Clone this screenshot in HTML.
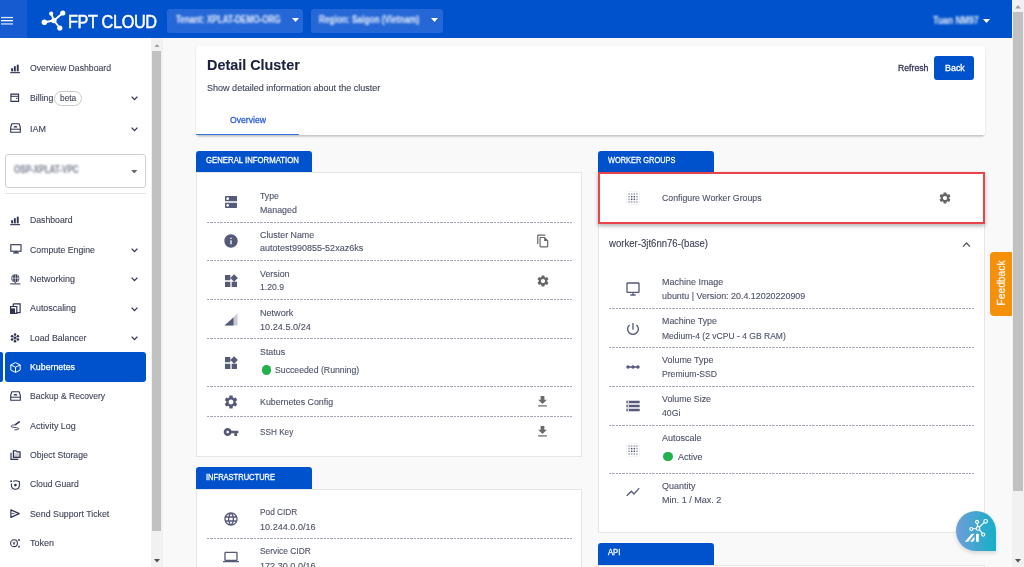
<!DOCTYPE html>
<html><head><meta charset="utf-8">
<style>
html,body{margin:0;padding:0;width:1024px;height:567px;overflow:hidden;background:#f9f9f9;font-family:"Liberation Sans",sans-serif;}
.a{position:absolute}
.t{position:absolute;white-space:nowrap;font-size:9.6px;line-height:12px;color:#3f4458;letter-spacing:0;transform-origin:0 0;-webkit-text-stroke-width:0.12px}
svg{position:absolute;display:block}
.blur{filter:blur(1.3px);color:rgba(255,255,255,.82);font-weight:700}
.sb{background:#f1f1f1}
.thumb{background:#c1c1c1}
.card{position:absolute;background:#fff;border:1px solid #e6e6e6;box-sizing:border-box}
.tab{position:absolute;background:#0052cc;border-radius:3px 3px 0 0}
.tabt{color:#fff;font-size:9.6px;letter-spacing:0;transform-origin:0 0;-webkit-text-stroke:0.3px #fff}
.dash{position:absolute;height:1px;background:linear-gradient(90deg,#a3a5b5 0 2.3px,transparent 2.3px 3.33px,#a3a5b5 3.33px 5.63px,transparent 5.63px 6.67px,#a3a5b5 6.67px 8.97px,transparent 8.97px 10px) 0 0/10px 1px repeat-x}
.ico{fill:#555a78}
.nav{color:#3f4458}
.lbl{color:#4d5268}
.chev{fill:#3f4458}
</style></head>
<body>
<!-- HEADER -->
<div class="a" style="left:0;top:0;width:1012px;height:38.4px;background:#0052cc"></div>
<div class="a" style="left:0;top:0;width:26.5px;height:38.4px;background:#175bd0"></div>
<svg style="left:1px;top:16px" width="13" height="9" viewBox="0 0 13 9"><rect x="0" y="0.9" width="12" height="1.3" fill="#fff" opacity=".85"/><rect x="0" y="4" width="12" height="1.3" fill="#fff"/><rect x="0" y="7.3" width="12" height="1.3" fill="#fff" opacity=".8"/></svg>
<!-- logo -->
<svg style="left:41px;top:10px" width="26" height="22" viewBox="0 0 26 22">
 <g stroke="#fff" stroke-width="1.9" fill="none"><line x1="3.4" y1="12.2" x2="12.9" y2="10.5"/><line x1="12.9" y1="10.5" x2="21.8" y2="3"/><line x1="12.9" y1="10.5" x2="18.8" y2="18"/><line x1="10.2" y1="3.7" x2="12.9" y2="10.5"/></g>
 <g fill="#fff"><circle cx="3.4" cy="12.2" r="2.8"/><circle cx="12.9" cy="10.5" r="2.7"/><circle cx="21.8" cy="3" r="2.6"/><circle cx="18.8" cy="18" r="2.6"/><circle cx="10.2" cy="3.7" r="2.1"/></g>
</svg>
<div class="t" style="left:68px;top:9.6px;font-size:18.6px;line-height:24px;color:#fff;letter-spacing:-0.4px;transform:scaleX(0.875);transform-origin:0 0;-webkit-text-stroke:0.5px #fff">FPT CLOUD</div>
<!-- tenant / region -->
<div class="a" style="left:167px;top:8.5px;width:136px;height:24px;background:#2567d6;border-radius:3px"></div>
<div class="t blur" style="left:175.5px;top:13.5px;font-size:10.4px;letter-spacing:0;transform:scaleX(0.78)">Tenant: XPLAT-DEMO-ORG</div>
<svg style="left:292px;top:18px" width="7" height="4" viewBox="0 0 7 4"><path d="M0 0h7L3.5 4z" fill="#fff"/></svg>
<div class="a" style="left:311px;top:8.5px;width:131.5px;height:24px;background:#2567d6;border-radius:3px"></div>
<div class="t blur" style="left:318.6px;top:13.5px;font-size:10.4px;letter-spacing:0;transform:scaleX(0.795)">Region: Saigon (Vietnam)</div>
<svg style="left:431px;top:18px" width="7" height="4" viewBox="0 0 7 4"><path d="M0 0h7L3.5 4z" fill="#fff"/></svg>
<!-- user -->
<div class="t blur" style="left:932.7px;top:14.8px;font-size:10.4px;letter-spacing:0;transform:scaleX(0.835)">Tuan NM97</div>
<svg style="left:983px;top:19px" width="7" height="4" viewBox="0 0 7 4"><path d="M0 0h7L3.5 4z" fill="#fff"/></svg>

<!-- PAGE SCROLLBAR -->
<div class="a sb" style="left:1012px;top:0;width:12px;height:567px"></div>
<svg style="left:1015px;top:5px" width="6" height="3.5" viewBox="0 0 7 4"><path d="M0 4h7L3.5 0z" fill="#a3a3a3"/></svg>
<div class="a thumb" style="left:1013px;top:12px;width:10px;height:479px"></div>
<svg style="left:1015px;top:559px" width="6" height="3.5" viewBox="0 0 7 4"><path d="M0 0h7L3.5 4z" fill="#505050"/></svg>

<!-- SIDEBAR -->
<div class="a" style="left:0;top:38px;width:151px;height:529px;background:#fff"></div>
<div class="a sb" style="left:151px;top:38px;width:12px;height:529px"></div>
<svg style="left:154px;top:43.5px" width="6" height="3.5" viewBox="0 0 7 4"><path d="M0 4h7L3.5 0z" fill="#a3a3a3"/></svg>
<div class="a thumb" style="left:152px;top:51px;width:9px;height:480px"></div>
<svg style="left:154px;top:559px" width="6" height="3.5" viewBox="0 0 7 4"><path d="M0 0h7L3.5 4z" fill="#505050"/></svg>


<!-- SIDEBAR ITEMS -->
<svg style="left:10px;top:64px" width="10" height="10" viewBox="0 0 10 10"><g fill="#2f3452"><rect x="1.2" y="4.2" width="1.9" height="3.2"/><rect x="3.9" y="2.2" width="1.9" height="5.2"/><rect x="6.8" y="0.7" width="1.9" height="6.7"/><rect x="0.2" y="8.1" width="9.8" height="1.1"/></g></svg>
<div class="t nav" style="left:30px;top:62px;letter-spacing:0;transform:scaleX(0.905)">Overview Dashboard</div>

<svg style="left:10px;top:93px" width="10" height="10" viewBox="0 0 10 10"><path d="M0.9 1.1H8.6V8.4H0.9Z" fill="none" stroke="#2f3452" stroke-width="1.1"/><path d="M0.9 3.3H8.6" stroke="#2f3452" stroke-width="1"/><rect x="6.2" y="4.8" width="1.3" height="1.2" fill="#2f3452"/></svg>
<div class="t nav" style="left:30px;top:91.5px;letter-spacing:0;transform:scaleX(0.91)">Billing</div>
<div class="a" style="left:53.7px;top:91px;width:28px;height:14.5px;box-sizing:border-box;border:1px solid #c9c9cf;border-radius:8px"></div>
<div class="t nav" style="left:60px;top:91.5px;letter-spacing:0;transform:scaleX(0.871)">beta</div>
<svg style="left:131px;top:96px" width="7" height="5" viewBox="0 0 7 5"><path d="M0.6 0.6L3.5 3.6 6.4 0.6" fill="none" stroke="#2f3452" stroke-width="1.3"/></svg>

<svg style="left:10px;top:123.3px" width="11" height="10" viewBox="0 0 11 10"><path d="M1.9 0.8H9.1L10.3 4.2V9.2H0.7V4.2Z" fill="none" stroke="#2f3452" stroke-width="1.1" stroke-linejoin="round"/><path d="M0.7 6.2H10.3" stroke="#2f3452" stroke-width="1"/><path d="M3.6 4.4C3.9 2.6 7.1 2.6 7.4 4.4Z" fill="#2f3452"/></svg>
<div class="t nav" style="left:30px;top:122.8px;letter-spacing:0;transform:scaleX(0.938)">IAM</div>
<svg style="left:131px;top:127px" width="7" height="5" viewBox="0 0 7 5"><path d="M0.6 0.6L3.5 3.6 6.4 0.6" fill="none" stroke="#2f3452" stroke-width="1.3"/></svg>

<!-- account select -->
<div class="a" style="left:5px;top:154px;width:141px;height:34px;box-sizing:border-box;border:1px solid #d0d0d0;border-radius:3px;background:#fff"></div>
<div class="t blur" style="left:14px;top:164.2px;font-size:10.4px;color:rgba(70,75,100,.68);filter:blur(1.3px);letter-spacing:0;transform:scaleX(0.78)">OSP-XPLAT-VPC</div>
<svg style="left:131px;top:169.5px" width="6.5" height="3.5" viewBox="0 0 7 4"><path d="M0 0h7L3.5 4z" fill="#666"/></svg>
<div class="a" style="left:5px;top:193px;width:141px;height:1px;background:#e6e6e6"></div>

<svg style="left:10px;top:216px" width="10" height="10" viewBox="0 0 10 10"><g fill="#2f3452"><rect x="1.2" y="4.2" width="1.9" height="3.2"/><rect x="3.9" y="2.2" width="1.9" height="5.2"/><rect x="6.8" y="0.7" width="1.9" height="6.7"/><rect x="0.2" y="8.1" width="9.8" height="1.1"/></g></svg>
<div class="t nav" style="left:30px;top:214px;letter-spacing:0;transform:scaleX(0.905)">Dashboard</div>

<svg style="left:9.5px;top:244px" width="12" height="10" viewBox="0 0 12 10"><g fill="none" stroke="#2f3452" stroke-width="1.1"><rect x="0.8" y="0.7" width="10.2" height="6.5"/></g><path d="M4.5 7.5h3v1h1.5v1h-6v-1h1.5z" fill="#2f3452"/></svg>
<div class="t nav" style="left:30px;top:243.5px;letter-spacing:0;transform:scaleX(0.908)">Compute Engine</div>
<svg style="left:131px;top:247.5px" width="7" height="5" viewBox="0 0 7 5"><path d="M0.6 0.6L3.5 3.6 6.4 0.6" fill="none" stroke="#2f3452" stroke-width="1.3"/></svg>

<svg style="left:10px;top:273.5px" width="11" height="11" viewBox="0 0 11 11"><circle cx="5.3" cy="4.2" r="4" fill="#2f3452"/><g stroke="#fff" stroke-width=".65" fill="none"><path d="M5.3 0.3v7.8M1.3 4.2h8M3.4 0.8c-1.1 2.1-1.1 4.7 0 6.8M7.2 0.8c1.1 2.1 1.1 4.7 0 6.8"/></g><path d="M5.3 8.2v1.4M0.2 9.9h10.2" stroke="#2f3452" stroke-width="1"/></svg>
<div class="t nav" style="left:30px;top:273px;letter-spacing:0;transform:scaleX(0.938)">Networking</div>
<svg style="left:131px;top:277px" width="7" height="5" viewBox="0 0 7 5"><path d="M0.6 0.6L3.5 3.6 6.4 0.6" fill="none" stroke="#2f3452" stroke-width="1.3"/></svg>

<svg style="left:10px;top:302.5px" width="11" height="11" viewBox="0 0 11 11"><path d="M3.3 0.8h6.8v8.8H6.8" fill="none" stroke="#2f3452" stroke-width="1.2"/><path d="M3.3 0.8V3.5" fill="none" stroke="#2f3452" stroke-width="1.2"/><path d="M0.6 3.5h6.2v6.9H0.6z" fill="none" stroke="#2f3452" stroke-width="1.2"/><rect x="0.6" y="5.4" width="4.4" height="5" fill="#2f3452"/></svg>
<div class="t nav" style="left:30px;top:302.3px;letter-spacing:0;transform:scaleX(0.927)">Autoscaling</div>
<svg style="left:131px;top:306.5px" width="7" height="5" viewBox="0 0 7 5"><path d="M0.6 0.6L3.5 3.6 6.4 0.6" fill="none" stroke="#2f3452" stroke-width="1.3"/></svg>

<svg style="left:10px;top:333px" width="10" height="10" viewBox="0 0 10 10"><g fill="#2f3452"><circle cx="5.00" cy="1.50" r="1.25"/><circle cx="7.94" cy="3.20" r="1.25"/><circle cx="7.94" cy="6.60" r="1.25"/><circle cx="5.00" cy="8.30" r="1.25"/><circle cx="2.06" cy="6.60" r="1.25"/><circle cx="2.06" cy="3.20" r="1.25"/><circle cx="5" cy="4.9" r="1.1"/></g><g stroke="#2f3452" stroke-width=".6"><path d="M5 1.5v6.8M2.05 3.2l5.9 3.4M7.95 3.2l-5.9 3.4"/></g></svg>
<div class="t nav" style="left:30px;top:331.7px;letter-spacing:0;transform:scaleX(0.912)">Load Balancer</div>
<svg style="left:131px;top:336px" width="7" height="5" viewBox="0 0 7 5"><path d="M0.6 0.6L3.5 3.6 6.4 0.6" fill="none" stroke="#2f3452" stroke-width="1.3"/></svg>

<!-- active kubernetes -->
<div class="a" style="left:5px;top:352px;width:141px;height:30px;background:#0052cc;border-radius:3px"></div>
<div class="a" style="left:0;top:352px;width:3px;height:30px;background:#0052cc;border-radius:0 2px 2px 0"></div>
<svg style="left:10px;top:361.5px" width="11" height="11" viewBox="0 0 11 11"><g fill="none" stroke="#fff" stroke-width="1"><path d="M5.5 0.6L10.2 2.9v5.2L5.5 10.4 0.8 8.1V2.9z"/><path d="M0.8 2.9L5.5 5.2 10.2 2.9M5.5 5.2v5.2"/></g></svg>
<div class="t" style="left:30px;top:361px;color:#fff;letter-spacing:0;transform:scaleX(0.917);-webkit-text-stroke:0.25px #fff">Kubernetes</div>

<svg style="left:10px;top:390.5px" width="11" height="10" viewBox="0 0 11 10"><path d="M1.9 0.8H9.1L10.3 4.2V9.2H0.7V4.2Z" fill="none" stroke="#2f3452" stroke-width="1.1" stroke-linejoin="round"/><path d="M0.7 6.2H10.3" stroke="#2f3452" stroke-width="1"/><path d="M3.6 4.4C3.9 2.6 7.1 2.6 7.4 4.4Z" fill="#2f3452"/></svg>
<div class="t nav" style="left:30px;top:390.3px;letter-spacing:0;transform:scaleX(0.891)">Backup &amp; Recovery</div>

<svg style="left:10px;top:421.3px" width="11" height="10" viewBox="0 0 11 10"><path d="M5.3 3.9C3 3.9 0.9 4.3 1.2 5.5 1.5 6.7 8.5 6.3 8.8 7.6 9 8.6 6.5 8.9 4.8 8.9" fill="none" stroke="#2f3452" stroke-width=".9" stroke-linecap="round"/><path d="M5.8 3.4L9.2 0.9" stroke="#2f3452" stroke-width="1.7" stroke-linecap="round"/></svg>
<div class="t nav" style="left:30px;top:419.7px;letter-spacing:0;transform:scaleX(0.934)">Activity Log</div>

<svg style="left:10px;top:450px" width="11" height="10" viewBox="0 0 11 10"><path d="M3.4 0.9H6.1L7.1 1.9H10.1V7.4H3.4Z" fill="none" stroke="#2f3452" stroke-width="1.2" stroke-linejoin="round"/><path d="M1 2.8V9.3H8.3" fill="none" stroke="#2f3452" stroke-width="1.2"/><rect x="3.4" y="3.2" width="6.7" height="4.2" fill="#2f3452" opacity=".25"/></svg>
<div class="t nav" style="left:30px;top:449px;letter-spacing:0;transform:scaleX(0.903)">Object Storage</div>

<svg style="left:10px;top:480px" width="11" height="10" viewBox="0 0 11 10"><path d="M3.2 1.3C5 0.5 7.2 0.6 9.4 1.8V5C9.4 7.4 7.6 9.1 5.4 9.3 3.1 9.1 1.4 7.3 1.4 5V3.4" fill="none" stroke="#2f3452" stroke-width="1.1"/><circle cx="5.4" cy="5.1" r="1.35" fill="#2f3452"/><circle cx="1.1" cy="1.2" r=".95" fill="#2f3452"/><circle cx="1" cy="9.3" r=".5" fill="#2f3452" opacity=".5"/><circle cx="9.8" cy="9.3" r=".5" fill="#2f3452" opacity=".5"/></svg>
<div class="t nav" style="left:30px;top:478.4px;letter-spacing:0;transform:scaleX(0.895)">Cloud Guard</div>

<svg style="left:10px;top:509.3px" width="10" height="10" viewBox="0 0 10 10"><path d="M0.9 0.9L9.2 4.6 0.9 8.4Z" fill="none" stroke="#2f3452" stroke-width="1.2" stroke-linejoin="round"/><path d="M1.6 4.6H4.6" stroke="#2f3452" stroke-width=".8"/></svg>
<div class="t nav" style="left:30px;top:507.8px;letter-spacing:0;transform:scaleX(0.918)">Send Support Ticket</div>

<svg style="left:10px;top:539.3px" width="11" height="9" viewBox="0 0 11 9"><circle cx="4" cy="4.2" r="3.4" fill="none" stroke="#2f3452" stroke-width="1.1"/><path d="M3 2.8L4 5.6 5 2.8" fill="none" stroke="#2f3452" stroke-width=".8"/><circle cx="9" cy="1" r=".9" fill="#2f3452"/><circle cx="9" cy="7.7" r=".9" fill="#2f3452"/></svg>
<div class="t nav" style="left:30px;top:537.2px;letter-spacing:0;transform:scaleX(0.937)">Token</div>


<!-- MAIN HEADER CARD -->
<div class="a" style="left:196px;top:46px;width:789px;height:89.5px;background:#fff;border-radius:4px;box-shadow:0 1px 2px rgba(0,0,0,.16)"></div>
<div class="t" style="left:207px;top:57.2px;font-size:15.4px;line-height:16px;font-weight:700;color:#1d2140;letter-spacing:0;transform:scaleX(0.935)">Detail Cluster</div>
<div class="t" style="left:207px;top:81.5px;color:#3f4458;letter-spacing:0;transform:scaleX(0.942)">Show detailed information about the cluster</div>
<div class="t" style="left:229.5px;top:113.5px;color:#2a5bd7;letter-spacing:0;transform:scaleX(0.9);-webkit-text-stroke:0.3px currentColor">Overview</div>
<div class="a" style="left:198px;top:135px;width:785px;height:1px;background:#c8c8c8"></div>
<div class="a" style="left:196px;top:133.6px;width:103px;height:1.7px;background:#2f74e0;border-radius:0 1px 1px 0"></div>
<div class="t" style="left:897.5px;top:61.8px;color:#2e3350;letter-spacing:0;transform:scaleX(0.905);-webkit-text-stroke:0.3px currentColor">Refresh</div>
<div class="a" style="left:934px;top:56px;width:40px;height:24px;background:#0052cc;border-radius:3px"></div>
<div class="t" style="left:944.5px;top:61.6px;color:#fff;letter-spacing:0;transform:scaleX(0.93);-webkit-text-stroke:0.3px currentColor">Back</div>

<!-- GENERAL INFORMATION -->
<div class="tab" style="left:196px;top:151px;width:116px;height:21px"></div>
<div class="t tabt" style="left:206px;top:154.3px;transform:scaleX(0.81)">GENERAL INFORMATION</div>
<div class="card" style="left:196px;top:172px;width:386px;height:285px"></div>

<svg style="left:223px;top:194px" width="16" height="16" viewBox="0 0 24 24"><path d="M20 13H4c-.55 0-1 .45-1 1v6c0 .55.45 1 1 1h16c.55 0 1-.45 1-1v-6c0-.55-.45-1-1-1zM7 19c-1.1 0-2-.9-2-2s.9-2 2-2 2 .9 2 2-.9 2-2 2zM20 3H4c-.55 0-1 .45-1 1v6c0 .55.45 1 1 1h16c.55 0 1-.45 1-1V4c0-.55-.45-1-1-1zM7 9c-1.1 0-2-.9-2-2s.9-2 2-2 2 .9 2 2-.9 2-2 2z" fill="#555a78"/></svg>
<div class="t lbl" style="left:260px;top:189.8px;letter-spacing:0;transform:scaleX(0.903)">Type</div>
<div class="t lbl" style="left:260px;top:203.8px;letter-spacing:0;transform:scaleX(0.920)">Managed</div>
<div class="dash" style="left:207px;top:222px;width:365px"></div>
<svg style="left:223px;top:233px" width="16" height="16" viewBox="0 0 24 24"><path d="M12 2C6.48 2 2 6.48 2 12s4.48 10 10 10 10-4.48 10-10S17.52 2 12 2zm1 15h-2v-6h2v6zm0-8h-2V7h2v2z" fill="#555a78"/></svg>
<div class="t lbl" style="left:260px;top:228.7px;letter-spacing:0;transform:scaleX(0.924)">Cluster Name</div>
<div class="t lbl" style="left:260px;top:242.4px;letter-spacing:0;transform:scaleX(0.939)">autotest990855-52xaz6ks</div>
<svg style="left:535.5px;top:234px" width="14" height="14" viewBox="0 0 24 24"><path d="M16 1H4c-1.1 0-2 .9-2 2v14h2V3h12V1zm-1 4H8c-1.1 0-2 .9-2 2v14c0 1.1.9 2 2 2h11c1.1 0 2-.9 2-2V11l-6-6zM8 21V7h6v5h5v9H8z" fill="#666"/></svg>
<div class="dash" style="left:207px;top:260px;width:365px"></div>
<svg style="left:223px;top:273px" width="16" height="16" viewBox="0 0 24 24"><path d="M13 13v8h8v-8h-8zM3 21h8v-8H3v8zM3 3v8h8V3H3zm13.66-1.31L11 7.34 16.66 13l5.66-5.66-5.66-5.65z" fill="#555a78"/></svg>
<div class="t lbl" style="left:260px;top:268.0px;letter-spacing:0;transform:scaleX(0.922)">Version</div>
<div class="t lbl" style="left:260px;top:281.3px;letter-spacing:0;transform:scaleX(0.903)">1.20.9</div>
<svg style="left:535.5px;top:273.5px" width="14" height="14" viewBox="0 0 24 24"><path d="M19.14 12.94c.04-.3.06-.61.06-.94 0-.32-.02-.64-.07-.94l2.03-1.58c.18-.14.23-.41.12-.61l-1.92-3.32c-.12-.22-.37-.29-.59-.22l-2.39.96c-.5-.38-1.03-.7-1.62-.94l-.36-2.54c-.04-.24-.24-.41-.48-.41h-3.84c-.24 0-.43.17-.47.41l-.36 2.54c-.59.24-1.13.57-1.62.94l-2.39-.96c-.22-.08-.47 0-.59.22L2.74 8.87c-.12.21-.08.47.12.61l2.03 1.58c-.05.3-.09.63-.09.94s.02.64.07.94l-2.03 1.58c-.18.14-.23.41-.12.61l1.92 3.32c.12.22.37.29.59.22l2.39-.96c.5.38 1.03.7 1.62.94l.36 2.54c.05.24.24.41.48.41h3.84c.24 0 .44-.17.47-.41l.36-2.54c.59-.24 1.13-.56 1.62-.94l2.39.96c.22.08.47 0 .59-.22l1.92-3.32c.12-.22.07-.47-.12-.61l-2.01-1.58zM12 15.6c-1.98 0-3.6-1.62-3.6-3.6s1.62-3.6 3.6-3.6 3.6 1.62 3.6 3.6-1.62 3.6-3.6 3.6z" fill="#666"/></svg>
<div class="dash" style="left:207px;top:299px;width:365px"></div>
<svg style="left:224px;top:312.8px" width="14" height="13" viewBox="0 0 14 13"><path d="M13.5 0.5V12.5H0.5z" fill="#c9cad6"/><path d="M9.5 4.5V12.5H0.5z" fill="#555a78"/></svg>
<div class="t lbl" style="left:260px;top:307.2px;letter-spacing:0;transform:scaleX(0.946)">Network</div>
<div class="t lbl" style="left:260px;top:320.5px;letter-spacing:0;transform:scaleX(0.952)">10.24.5.0/24</div>
<div class="dash" style="left:207px;top:338px;width:365px"></div>
<svg style="left:223px;top:355px" width="16" height="16" viewBox="0 0 24 24"><path d="M13 13v8h8v-8h-8zM3 21h8v-8H3v8zM3 3v8h8V3H3zm13.66-1.31L11 7.34 16.66 13l5.66-5.66-5.66-5.65z" fill="#555a78"/></svg>
<div class="t lbl" style="left:260px;top:346.3px;letter-spacing:0;transform:scaleX(0.923)">Status</div>
<div class="a" style="left:261.5px;top:365.3px;width:9.5px;height:9.5px;border-radius:50%;background:#22b14c"></div>
<div class="t lbl" style="left:275px;top:364.2px;letter-spacing:0;transform:scaleX(0.907)">Succeeded (Running)</div>
<div class="dash" style="left:207px;top:386px;width:365px"></div>
<svg style="left:223px;top:394px" width="16" height="16" viewBox="0 0 24 24"><path d="M19.14 12.94c.04-.3.06-.61.06-.94 0-.32-.02-.64-.07-.94l2.03-1.58c.18-.14.23-.41.12-.61l-1.92-3.32c-.12-.22-.37-.29-.59-.22l-2.39.96c-.5-.38-1.03-.7-1.62-.94l-.36-2.54c-.04-.24-.24-.41-.48-.41h-3.84c-.24 0-.43.17-.47.41l-.36 2.54c-.59.24-1.13.57-1.62.94l-2.39-.96c-.22-.08-.47 0-.59.22L2.74 8.87c-.12.21-.08.47.12.61l2.03 1.58c-.05.3-.09.63-.09.94s.02.64.07.94l-2.03 1.58c-.18.14-.23.41-.12.61l1.92 3.32c.12.22.37.29.59.22l2.39-.96c.5.38 1.03.7 1.62.94l.36 2.54c.05.24.24.41.48.41h3.84c.24 0 .44-.17.47-.41l.36-2.54c.59-.24 1.13-.56 1.62-.94l2.39.96c.22.08.47 0 .59-.22l1.92-3.32c.12-.22.07-.47-.12-.61l-2.01-1.58zM12 15.6c-1.98 0-3.6-1.62-3.6-3.6s1.62-3.6 3.6-3.6 3.6 1.62 3.6 3.6-1.62 3.6-3.6 3.6z" fill="#555a78"/></svg>
<div class="t lbl" style="left:260px;top:396.2px;letter-spacing:0;transform:scaleX(0.919)">Kubernetes Config</div>
<svg style="left:535.1px;top:393.7px" width="15" height="15" viewBox="0 0 24 24"><path d="M19 9h-4V3H9v6H5l7 7 7-7zM5 18v2h14v-2H5z" fill="#6b6b6b"/></svg>
<div class="dash" style="left:207px;top:416px;width:365px"></div>
<svg style="left:223px;top:423.5px" width="16" height="16" viewBox="0 0 24 24"><path d="M12.65 10C11.83 7.67 9.61 6 7 6c-3.31 0-6 2.69-6 6s2.69 6 6 6c2.61 0 4.83-1.67 5.65-4H17v4h4v-4h2v-4H12.65zM7 14c-1.1 0-2-.9-2-2s.9-2 2-2 2 .9 2 2-.9 2-2 2z" fill="#555a78"/></svg>
<div class="t lbl" style="left:260px;top:426.0px;letter-spacing:0;transform:scaleX(0.855)">SSH Key</div>
<svg style="left:535.1px;top:423.8px" width="15" height="15" viewBox="0 0 24 24"><path d="M19 9h-4V3H9v6H5l7 7 7-7zM5 18v2h14v-2H5z" fill="#6b6b6b"/></svg>
<div class="tab" style="left:196px;top:467px;width:116px;height:22px"></div>
<div class="t tabt" style="left:205.8px;top:470.7px;transform:scaleX(0.785)">INFRASTRUCTURE</div>
<div class="card" style="left:196px;top:489px;width:386px;height:90px"></div>
<svg style="left:223px;top:510.5px" width="16" height="16" viewBox="0 0 24 24"><path d="M11.99 2C6.47 2 2 6.48 2 12s4.47 10 9.99 10C17.52 22 22 17.52 22 12S17.52 2 11.99 2zm6.93 6h-2.950c-.32-1.25-.78-2.45-1.38-3.56 1.84.63 3.37 1.91 4.33 3.56zM12 4.04c.83 1.2 1.48 2.53 1.91 3.96h-3.82c.43-1.43 1.08-2.76 1.91-3.96zM4.26 14C4.1 13.36 4 12.69 4 12s.1-1.36.26-2h3.38c-.08.66-.14 1.32-.14 2 0 .68.06 1.34.14 2H4.26zm.82 2h2.95c.32 1.25.78 2.45 1.38 3.56-1.84-.63-3.37-1.9-4.33-3.56zm2.95-8H5.08c.96-1.66 2.49-2.93 4.33-3.56C8.81 5.55 8.35 6.75 8.03 8zM12 19.96c-.83-1.2-1.48-2.53-1.91-3.96h3.82c-.43 1.43-1.08 2.76-1.91 3.96zM14.34 14H9.66c-.09-.66-.16-1.32-.16-2 0-.68.07-1.35.16-2h4.68c.09.65.16 1.32.16 2 0 .68-.07 1.34-.16 2zm.25 5.56c.6-1.11 1.06-2.31 1.38-3.56h2.95c-.96 1.65-2.49 2.93-4.33 3.56zM16.36 14c.08-.66.14-1.32.14-2 0-.68-.06-1.34-.14-2h3.38c.16.64.26 1.31.26 2s-.1 1.36-.26 2h-3.38z" fill="#555a78"/></svg>
<div class="t lbl" style="left:260px;top:506.3px;letter-spacing:0;transform:scaleX(0.864)">Pod CIDR</div>
<div class="t lbl" style="left:260px;top:520.6px;letter-spacing:0;transform:scaleX(0.947)">10.244.0.0/16</div>
<div class="dash" style="left:207px;top:538px;width:365px"></div>
<svg style="left:223px;top:549px" width="16" height="16" viewBox="0 0 24 24"><path d="M20 18c1.1 0 1.99-.9 1.99-2L22 6c0-1.1-.9-2-2-2H4c-1.1 0-2 .9-2 2v10c0 1.1.9 2 2 2H0v2h24v-2h-4zM4 6h16v10H4V6z" fill="#555a78"/></svg>
<div class="t lbl" style="left:260px;top:545.4px;letter-spacing:0;transform:scaleX(0.874)">Service CIDR</div>
<div class="t lbl" style="left:260px;top:559.5px;letter-spacing:0;transform:scaleX(0.947)">172.30.0.0/16</div>
<div class="tab" style="left:598px;top:151px;width:116px;height:21px"></div>
<div class="t tabt" style="left:607.8px;top:154.3px;transform:scaleX(0.771)">WORKER GROUPS</div>
<div class="card" style="left:598px;top:223px;width:387px;height:310px;border-top:none"></div>
<div class="a" style="left:598px;top:172px;width:387px;height:52px;box-sizing:border-box;background:#fff;border:2px solid #e84449;box-shadow:0 2px 4px rgba(0,0,0,.3)"></div>
<svg style="left:625.8px;top:190.6px" width="14" height="14" viewBox="0 0 14 14"><g fill="#3d4270"><rect x="-0.32" y="2.33" width="1.4" height="1.4" opacity="0.12"/><rect x="-0.32" y="4.97" width="1.4" height="1.4" opacity="0.12"/><rect x="-0.32" y="7.62" width="1.4" height="1.4" opacity="0.12"/><rect x="-0.32" y="10.28" width="1.4" height="1.4" opacity="0.12"/><rect x="2.33" y="-0.32" width="1.4" height="1.4" opacity="0.12"/><rect x="2.33" y="2.33" width="1.4" height="1.4" opacity="0.55"/><rect x="2.33" y="4.97" width="1.4" height="1.4" opacity="0.55"/><rect x="2.33" y="7.62" width="1.4" height="1.4" opacity="0.55"/><rect x="2.33" y="10.28" width="1.4" height="1.4" opacity="0.55"/><rect x="2.33" y="12.93" width="1.4" height="1.4" opacity="0.12"/><rect x="4.97" y="-0.32" width="1.4" height="1.4" opacity="0.12"/><rect x="4.97" y="2.33" width="1.4" height="1.4" opacity="0.55"/><rect x="4.97" y="4.97" width="1.4" height="1.4" opacity="0.95"/><rect x="4.97" y="7.62" width="1.4" height="1.4" opacity="0.95"/><rect x="4.97" y="10.28" width="1.4" height="1.4" opacity="0.55"/><rect x="4.97" y="12.93" width="1.4" height="1.4" opacity="0.12"/><rect x="7.62" y="-0.32" width="1.4" height="1.4" opacity="0.12"/><rect x="7.62" y="2.33" width="1.4" height="1.4" opacity="0.55"/><rect x="7.62" y="4.97" width="1.4" height="1.4" opacity="0.95"/><rect x="7.62" y="7.62" width="1.4" height="1.4" opacity="0.95"/><rect x="7.62" y="10.28" width="1.4" height="1.4" opacity="0.55"/><rect x="7.62" y="12.93" width="1.4" height="1.4" opacity="0.12"/><rect x="10.28" y="-0.32" width="1.4" height="1.4" opacity="0.12"/><rect x="10.28" y="2.33" width="1.4" height="1.4" opacity="0.55"/><rect x="10.28" y="4.97" width="1.4" height="1.4" opacity="0.55"/><rect x="10.28" y="7.62" width="1.4" height="1.4" opacity="0.55"/><rect x="10.28" y="10.28" width="1.4" height="1.4" opacity="0.55"/><rect x="10.28" y="12.93" width="1.4" height="1.4" opacity="0.12"/><rect x="12.93" y="2.33" width="1.4" height="1.4" opacity="0.12"/><rect x="12.93" y="4.97" width="1.4" height="1.4" opacity="0.12"/><rect x="12.93" y="7.62" width="1.4" height="1.4" opacity="0.12"/><rect x="12.93" y="10.28" width="1.4" height="1.4" opacity="0.12"/></g></svg>
<div class="t lbl" style="left:662px;top:191.9px;letter-spacing:0;transform:scaleX(0.912)">Configure Worker Groups</div>
<svg style="left:937.5px;top:190.5px" width="14" height="14" viewBox="0 0 24 24"><path d="M19.14 12.94c.04-.3.06-.61.06-.94 0-.32-.02-.64-.07-.94l2.03-1.58c.18-.14.23-.41.12-.61l-1.92-3.32c-.12-.22-.37-.29-.59-.22l-2.39.96c-.5-.38-1.03-.7-1.62-.94l-.36-2.54c-.04-.24-.24-.41-.48-.41h-3.84c-.24 0-.43.17-.47.41l-.36 2.54c-.59.24-1.13.57-1.62.94l-2.39-.96c-.22-.08-.47 0-.59.22L2.74 8.87c-.12.21-.08.47.12.61l2.03 1.58c-.05.3-.09.63-.09.94s.02.64.07.94l-2.03 1.58c-.18.14-.23.41-.12.61l1.92 3.32c.12.22.37.29.59.22l2.39-.96c.5.38 1.03.7 1.62.94l.36 2.54c.05.24.24.41.48.41h3.84c.24 0 .44-.17.47-.41l.36-2.54c.59-.24 1.13-.56 1.62-.94l2.39.96c.22.08.47 0 .59-.22l1.92-3.32c.12-.22.07-.47-.12-.61l-2.01-1.58zM12 15.6c-1.98 0-3.6-1.62-3.6-3.6s1.62-3.6 3.6-3.6 3.6 1.62 3.6 3.6-1.62 3.6-3.6 3.6z" fill="#666"/></svg>
<div class="t lbl" style="left:609.3px;top:237.5px;font-size:10.4px;color:#3a3f55;letter-spacing:0;transform:scaleX(0.922)">worker-3jt6nn76-(base)</div>
<svg style="left:962px;top:240.5px" width="9" height="7" viewBox="0 0 9 7"><path d="M1 5.6L4.5 2 8 5.6" fill="none" stroke="#555" stroke-width="1.3"/></svg>
<svg style="left:625px;top:281px" width="16" height="16" viewBox="0 0 24 24"><path d="M20 2H4c-1.1 0-2 .9-2 2v12c0 1.1.9 2 2 2h7v2H8v2h8v-2h-3v-2h7c1.1 0 2-.9 2-2V4c0-1.1-.9-2-2-2zm0 14H4V4h16v12z" fill="#555a78"/></svg>
<div class="t lbl" style="left:662px;top:276.0px;letter-spacing:0;transform:scaleX(0.935)">Machine Image</div>
<div class="t lbl" style="left:662px;top:290.0px;letter-spacing:0;transform:scaleX(0.927)">ubuntu | Version: 20.4.12020220909</div>
<div class="dash" style="left:608.5px;top:308px;width:365.5px"></div>
<svg style="left:625px;top:320.5px" width="16" height="16" viewBox="0 0 24 24"><path d="M13 3h-2v10h2V3zm4.83 2.17l-1.42 1.42C17.99 7.86 19 9.81 19 12c0 3.87-3.13 7-7 7s-7-3.13-7-7c0-2.19 1.01-4.14 2.58-5.42L6.17 5.17C4.23 6.82 3 9.260 3 12c0 4.97 4.03 9 9 9s9-4.03 9-9c0-2.74-1.23-5.18-3.17-6.83z" fill="#555a78"/></svg>
<div class="t lbl" style="left:662px;top:315.4px;letter-spacing:0;transform:scaleX(0.923)">Machine Type</div>
<div class="t lbl" style="left:662px;top:329.5px;letter-spacing:0;transform:scaleX(0.890)">Medium-4 (2 vCPU - 4 GB RAM)</div>
<div class="dash" style="left:608.5px;top:347px;width:365.5px"></div>
<svg style="left:625px;top:358.5px" width="16" height="16" viewBox="0 0 24 24"><path d="M19.5 9.5c-1.03 0-1.9.62-2.29 1.5h-2.92c-.39-.88-1.26-1.5-2.29-1.5s-1.9.62-2.29 1.5H6.79c-.39-.88-1.26-1.5-2.29-1.5C3.12 9.5 2 10.62 2 12s1.12 2.5 2.5 2.5c1.03 0 1.9-.62 2.29-1.5h2.92c.39.88 1.26 1.5 2.29 1.5s1.9-.62 2.29-1.5h2.92c.39.88 1.26 1.5 2.29 1.5 1.38 0 2.5-1.12 2.5-2.5s-1.12-2.5-2.5-2.5z" fill="#555a78"/></svg>
<div class="t lbl" style="left:662px;top:354.1px;letter-spacing:0;transform:scaleX(0.931)">Volume Type</div>
<div class="t lbl" style="left:662px;top:368.2px;letter-spacing:0;transform:scaleX(0.897)">Premium-SSD</div>
<div class="dash" style="left:608.5px;top:386px;width:365.5px"></div>
<svg style="left:625px;top:398px" width="16" height="16" viewBox="0 0 24 24"><path d="M2 20h20v-4H2v4zm2-3h2v2H4v-2zM2 4v4h20V4H2zm4 3H4V5h2v2zm-4 7h20v-4H2v4zm2-3h2v2H4v-2z" fill="#555a78"/></svg>
<div class="t lbl" style="left:662px;top:392.8px;letter-spacing:0;transform:scaleX(0.919)">Volume Size</div>
<div class="t lbl" style="left:662px;top:407.0px;letter-spacing:0;transform:scaleX(0.908)">40Gi</div>
<div class="dash" style="left:608.5px;top:425px;width:365.5px"></div>
<svg style="left:625.8px;top:442.7px" width="14" height="14" viewBox="0 0 14 14"><g fill="#3d4270"><rect x="-0.32" y="2.33" width="1.4" height="1.4" opacity="0.12"/><rect x="-0.32" y="4.97" width="1.4" height="1.4" opacity="0.12"/><rect x="-0.32" y="7.62" width="1.4" height="1.4" opacity="0.12"/><rect x="-0.32" y="10.28" width="1.4" height="1.4" opacity="0.12"/><rect x="2.33" y="-0.32" width="1.4" height="1.4" opacity="0.12"/><rect x="2.33" y="2.33" width="1.4" height="1.4" opacity="0.55"/><rect x="2.33" y="4.97" width="1.4" height="1.4" opacity="0.55"/><rect x="2.33" y="7.62" width="1.4" height="1.4" opacity="0.55"/><rect x="2.33" y="10.28" width="1.4" height="1.4" opacity="0.55"/><rect x="2.33" y="12.93" width="1.4" height="1.4" opacity="0.12"/><rect x="4.97" y="-0.32" width="1.4" height="1.4" opacity="0.12"/><rect x="4.97" y="2.33" width="1.4" height="1.4" opacity="0.55"/><rect x="4.97" y="4.97" width="1.4" height="1.4" opacity="0.95"/><rect x="4.97" y="7.62" width="1.4" height="1.4" opacity="0.95"/><rect x="4.97" y="10.28" width="1.4" height="1.4" opacity="0.55"/><rect x="4.97" y="12.93" width="1.4" height="1.4" opacity="0.12"/><rect x="7.62" y="-0.32" width="1.4" height="1.4" opacity="0.12"/><rect x="7.62" y="2.33" width="1.4" height="1.4" opacity="0.55"/><rect x="7.62" y="4.97" width="1.4" height="1.4" opacity="0.95"/><rect x="7.62" y="7.62" width="1.4" height="1.4" opacity="0.95"/><rect x="7.62" y="10.28" width="1.4" height="1.4" opacity="0.55"/><rect x="7.62" y="12.93" width="1.4" height="1.4" opacity="0.12"/><rect x="10.28" y="-0.32" width="1.4" height="1.4" opacity="0.12"/><rect x="10.28" y="2.33" width="1.4" height="1.4" opacity="0.55"/><rect x="10.28" y="4.97" width="1.4" height="1.4" opacity="0.55"/><rect x="10.28" y="7.62" width="1.4" height="1.4" opacity="0.55"/><rect x="10.28" y="10.28" width="1.4" height="1.4" opacity="0.55"/><rect x="10.28" y="12.93" width="1.4" height="1.4" opacity="0.12"/><rect x="12.93" y="2.33" width="1.4" height="1.4" opacity="0.12"/><rect x="12.93" y="4.97" width="1.4" height="1.4" opacity="0.12"/><rect x="12.93" y="7.62" width="1.4" height="1.4" opacity="0.12"/><rect x="12.93" y="10.28" width="1.4" height="1.4" opacity="0.12"/></g></svg>
<div class="t lbl" style="left:662px;top:431.5px;letter-spacing:0;transform:scaleX(0.940)">Autoscale</div>
<div class="a" style="left:663.2px;top:451.6px;width:9.7px;height:9.7px;border-radius:50%;background:#22b14c"></div>
<div class="t lbl" style="left:677.6px;top:451.0px;letter-spacing:0;transform:scaleX(0.941)">Active</div>
<div class="dash" style="left:608.5px;top:473px;width:365.5px"></div>
<svg style="left:625px;top:484px" width="16" height="16" viewBox="0 0 24 24"><path d="M3.5 18.49l6-6.01 4 4L22 6.92l-1.41-1.41-7.09 7.97-4-4L2 16.99z" fill="#555a78"/></svg>
<div class="t lbl" style="left:662px;top:480.0px;letter-spacing:0;transform:scaleX(0.935)">Quantity</div>
<div class="t lbl" style="left:662px;top:493.8px;letter-spacing:0;transform:scaleX(0.944)">Min. 1 / Max. 2</div>
<div class="tab" style="left:598px;top:543px;width:116px;height:23px"></div>
<div class="t tabt" style="left:607.7px;top:546.3px;transform:scaleX(0.8)">API</div>
<div class="card" style="left:598px;top:565px;width:387px;height:40px"></div>
<div class="a" style="left:989.5px;top:252px;width:22.5px;height:64px;background:#f5900b;border-radius:4px 0 0 4px"></div>
<div class="t" style="left:1001.7px;top:283.4px;color:#fff;font-size:10.4px;letter-spacing:-0.05px;transform-origin:50% 50%;transform:translate(-50%,-50%) rotate(-90deg);line-height:12px">Feedback</div>
<div class="a" style="left:956.3px;top:511.3px;width:40px;height:40px;border-radius:20px 20px 0 20px;background:linear-gradient(90deg,#6f9dd8,#14afc8);box-shadow:0 2px 4px rgba(0,0,0,.15)"></div>
<svg style="left:961.5px;top:516px" width="30" height="30" viewBox="0 0 30 30"><g fill="none" stroke="#fff" stroke-width="1.1"><circle cx="16" cy="12.4" r="1.8"/><circle cx="9.3" cy="13" r="1.5"/><circle cx="15.1" cy="5.9" r="1.5"/><circle cx="23.6" cy="5.3" r="1.8"/><circle cx="21.2" cy="18.6" r="1.6"/><path d="M10.8 12.8h3.4M15.3 7.4l.4 3.2M22.3 6.5l-5 4.6M17.3 13.6l3 3.6"/></g><path d="M2.9 25.8H6.1L12.5 17.8H9.7z" fill="#fff"/><path d="M8.1 25.8H11.1L12.5 23.8V20.6z" fill="#fff"/><rect x="14" y="17.8" width="2.8" height="8" fill="#fff"/></svg>
</body></html>
